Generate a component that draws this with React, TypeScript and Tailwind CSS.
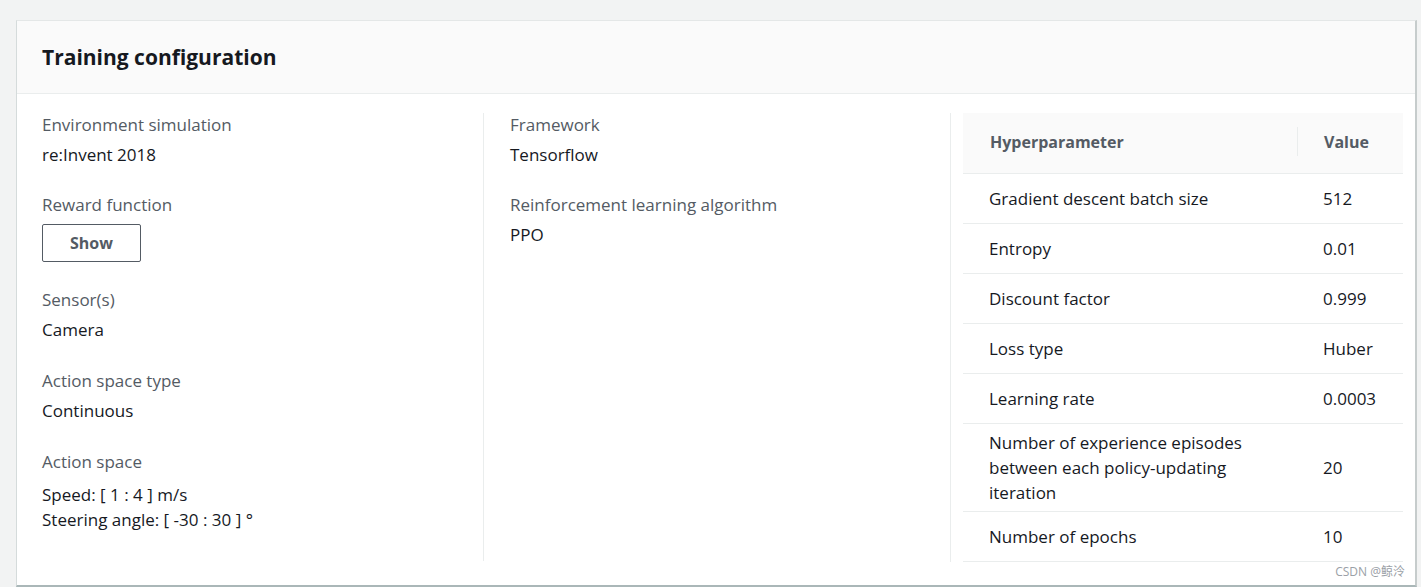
import React from 'react';

const hyperparameters = [
  { name: 'Gradient descent batch size', value: '512' },
  { name: 'Entropy', value: '0.01' },
  { name: 'Discount factor', value: '0.999' },
  { name: 'Loss type', value: 'Huber' },
  { name: 'Learning rate', value: '0.0003' },
  { name: 'Number of experience episodes between each policy-updating iteration', value: '20' },
  { name: 'Number of epochs', value: '10' },
];

function Field({ label, children, gap = 'mb-[27px]' }: { label: string; children: React.ReactNode; gap?: string }) {
  return (
    <div className={gap}>
      <div className="text-[17px] leading-[23px] text-[#545b64]">{label}</div>
      <div className="mt-[7px] text-[17px] leading-[23px] text-[#16191f]">{children}</div>
    </div>
  );
}

export default function App() {
  return (
    <div
      className="min-h-[587px] bg-[#f2f3f3] pt-[20px] pl-[16px] pr-[4px]"
      style={{ fontFamily: '"Open Sans", "Noto Sans", "Noto Sans CJK SC", sans-serif' }}
    >
      <div className="relative h-[567px] border-l border-[#d5dbdb] border-b-2 border-b-[#aab7b8] border-r-2 border-r-[#c6cccc] border-t border-t-[#e4e7e7] bg-white">
        {/* Header */}
        <div className="flex h-[73px] items-center border-b border-[#eaeded] bg-[#fafafa] pl-[25px]">
          <h2 className="text-[21px] font-bold leading-[24px] text-[#16191f]">Training configuration</h2>
        </div>

        {/* Body */}
        <div className="flex pt-[19px]">
          <div className="w-[466px] pl-[25px]">
            <Field label="Environment simulation">re:Invent 2018</Field>
            <div className="mb-[26px]">
              <div className="text-[17px] leading-[23px] text-[#545b64]">Reward function</div>
              <button className="mt-[8px] h-[38px] w-[99px] rounded-[2px] border border-[#545b64] bg-white text-[16px] font-bold text-[#545b64]">
                Show
              </button>
            </div>
            <Field label="Sensor(s)" gap="mb-[28px]">Camera</Field>
            <Field label="Action space type" gap="mb-[28px]">Continuous</Field>
            <div>
              <div className="text-[17px] leading-[23px] text-[#545b64]">Action space</div>
              <div className="mt-[9px] text-[17px] leading-[25px] text-[#16191f]">
                <div>Speed: [ 1 : 4 ] m/s</div>
                <div>Steering angle: [ -30 : 30 ] °</div>
              </div>
            </div>
          </div>

          <div className="h-[448px] w-[467px] border-l border-[#eaeded] pl-[26px]">
            <Field label="Framework">Tensorflow</Field>
            <Field label="Reinforcement learning algorithm">PPO</Field>
          </div>

          <div className="flex-1 border-l border-[#eaeded] pl-[12px] pr-[12px]">
            <table className="w-full border-collapse text-left text-[17px] text-[#16191f]">
              <thead>
                <tr className="h-[60px] border-b border-[#eaeded] bg-[#fafafa]">
                  <th className="w-[335px] p-0 pb-[2px] pl-[27px] text-[16px] font-bold text-[#545b64]">
                    <div className="flex items-center justify-between">
                      <span>Hyperparameter</span>
                      <span className="h-[29px] w-px bg-[#eaeded]" />
                    </div>
                  </th>
                  <th className="p-0 pb-[2px] pl-[26px] text-[16px] font-bold text-[#545b64]">Value</th>
                </tr>
              </thead>
              <tbody>
                {hyperparameters.map((row) => (
                  <tr key={row.name} className="h-[50px] border-b border-[#eaeded]">
                    <td className="py-[6px] pl-[26px] pr-[50px] leading-[25px]">{row.name}</td>
                    <td className="py-[6px] pl-[25px] leading-[25px]">{row.value}</td>
                  </tr>
                ))}
              </tbody>
            </table>
          </div>
        </div>

        <div className="absolute bottom-[4px] right-[10px] text-[12px] text-[#9aa0a6]">CSDN @鲸泠</div>
      </div>
    </div>
  );
}
